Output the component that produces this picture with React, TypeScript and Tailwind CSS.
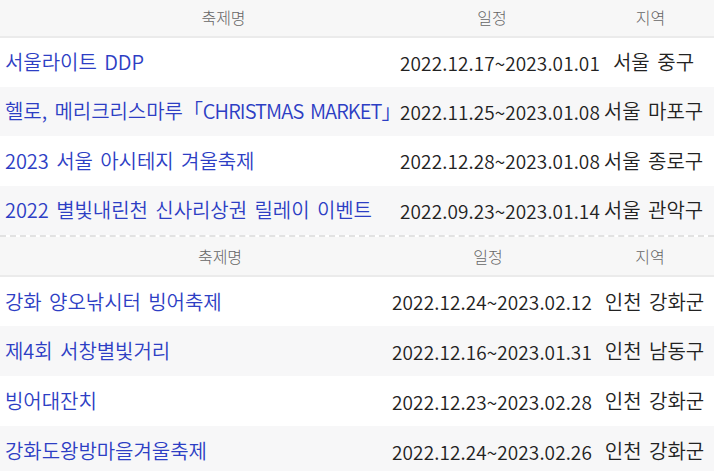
import React from 'react';

type Festival = { name: string; latin?: string; tail?: string; period: string; region: string };

const seoul: Festival[] = [
  { name: '서울라이트 DDP', period: '2022.12.17~2023.01.01', region: '서울 중구' },
  { name: '헬로, 메리크리스마루「', latin: 'CHRISTMAS MARKET', tail: '」', period: '2022.11.25~2023.01.08', region: '서울 마포구' },
  { name: '2023 서울 아시테지 겨울축제', period: '2022.12.28~2023.01.08', region: '서울 종로구' },
  { name: '2022 별빛내린천 신사리상권 릴레이 이벤트', period: '2022.09.23~2023.01.14', region: '서울 관악구' },
];

const incheon: Festival[] = [
  { name: '강화 양오낚시터 빙어축제', period: '2022.12.24~2023.02.12', region: '인천 강화군' },
  { name: '제4회 서창별빛거리', period: '2022.12.16~2023.01.31', region: '인천 남동구' },
  { name: '빙어대잔치', period: '2022.12.23~2023.02.28', region: '인천 강화군' },
  { name: '강화도왕방마을겨울축제', period: '2022.12.24~2023.02.26', region: '인천 강화군' },
];

const FestivalTable: React.FC<{ rows: Festival[]; first?: boolean }> = ({ rows, first }) => (
  <table className={`w-full table-fixed border-collapse ${first ? '-mt-[3px]' : ''}`}>
    <colgroup>
      <col className={first ? 'w-[395px]' : 'w-[392px]'} />
      <col className={first ? 'w-[206px]' : 'w-[208px]'} />
      <col />
    </colgroup>
    <thead>
      <tr className={`${first ? 'h-[40px]' : 'h-[39px]'} bg-[#f7f7f7] text-[16px] text-[#666]`}>
        <th className={`border-b-2 border-[#ebebeb] font-light ${first ? 'pl-[52px]' : 'pl-[48px]'}`}>축제명</th>
        <th className={`border-b-2 border-[#ebebeb] font-light ${first ? 'pr-[12px]' : 'pr-[16px]'}`}>일정</th>
        <th className="border-b-2 border-[#ebebeb] pr-[14px] font-light">지역</th>
      </tr>
    </thead>
    <tbody>
      {rows.map((r, i) => (
        <tr key={r.name} className={`${first ? 'h-[49.5px]' : 'h-[50px]'} ${i % 2 === 1 ? 'bg-[#f7f7f8]' : 'bg-white'}`}>
          <td className="whitespace-nowrap pl-[5px] text-[20px] font-[350] tracking-[-0.05px] [word-spacing:3px] text-[#2d3ec4]">
            {r.name}
            {r.latin && <span className="tracking-[-0.9px]">{r.latin}</span>}
            {r.tail}
          </td>
          <td className={`whitespace-nowrap text-center font-[350] tracking-[0.1px] text-[#222] ${first ? 'pl-[4px]' : 'pr-[8px]'}`}>{r.period}</td>
          <td className={`whitespace-nowrap text-center text-[20px] font-[350] [word-spacing:3px] text-[#222] ${first ? 'pr-[8px]' : 'pr-[5px]'}`}>{r.region}</td>
        </tr>
      ))}
    </tbody>
  </table>
);

export default function App() {
  return (
    <div className="h-[471px] w-[714px] overflow-hidden bg-white font-['Noto_Sans_CJK_KR',sans-serif] text-[19px] leading-none">
      <FestivalTable rows={seoul} first />
      <div className="h-0 border-b-2 border-dashed border-[#e2e2e2]" />
      <FestivalTable rows={incheon} />
    </div>
  );
}
